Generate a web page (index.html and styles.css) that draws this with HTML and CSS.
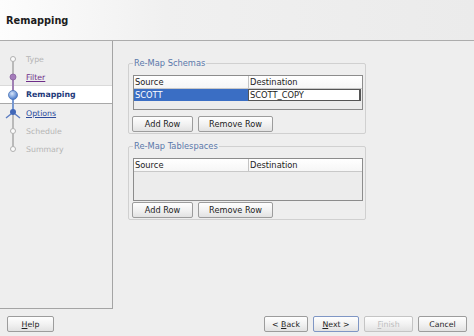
FILE: index.html
```html
<!DOCTYPE html>
<html lang="en">
<head>
    <meta charset="UTF-8">
    <meta name="viewport" content="width=device-width, initial-scale=1.0">
    <title>Remapping</title>
    <link rel="stylesheet" href="styles.css">
</head>
<body>
<div class="dialog">
    <div class="header">
        <h1>Remapping</h1>
    </div>

    <div class="main">
        <!-- wizard steps -->
        <ul class="steps">
            <li class="step off">
                <svg width="26" height="18"><line x1="13" y1="9" x2="13" y2="18" stroke="#b9b9b9" stroke-width="2"/><circle cx="13" cy="9" r="2.5" fill="#fbfbfb" stroke="#b0b0b0"/></svg>
                <span>Type</span>
            </li>
            <li class="step visited">
                <svg width="26" height="18"><line x1="13" y1="0" x2="13" y2="9" stroke="#b9b9b9" stroke-width="2"/><line x1="13" y1="9" x2="13" y2="18" stroke="#a080b4" stroke-width="2"/><circle cx="13" cy="9" r="3" fill="#a47cba" stroke="#8a62a0" stroke-width="0.8"/></svg>
                <a href="#">Filter</a>
            </li>
            <li class="step current">
                <svg width="26" height="18">
                    <defs><radialGradient id="cur" cx="40%" cy="35%" r="70%"><stop offset="0" stop-color="#d6e6fb"/><stop offset="1" stop-color="#3c6fc4"/></radialGradient></defs>
                    <line x1="13" y1="0" x2="13" y2="9" stroke="#a080b4" stroke-width="2"/><line x1="13" y1="9" x2="13" y2="18" stroke="#7898d0" stroke-width="2"/><circle cx="13" cy="9" r="4.5" fill="url(#cur)" stroke="#4a73b8" stroke-width="0.8"/></svg>
                <span>Remapping</span>
            </li>
            <li class="step next">
                <svg width="26" height="18"><line x1="13" y1="0" x2="13" y2="8" stroke="#7898d0" stroke-width="2"/><line x1="13" y1="8" x2="13" y2="18" stroke="#b9b9b9" stroke-width="2"/><path d="M11 10 L6 14 M15 10 L20 14" stroke="#5b7cc2" stroke-width="1.4" fill="none"/><circle cx="13" cy="8" r="3" fill="#4067b8"/></svg>
                <a href="#">Options</a>
            </li>
            <li class="step off">
                <svg width="26" height="18"><line x1="13" y1="0" x2="13" y2="18" stroke="#b9b9b9" stroke-width="2"/><circle cx="13" cy="9" r="2.5" fill="#fbfbfb" stroke="#b0b0b0"/></svg>
                <span>Schedule</span>
            </li>
            <li class="step off">
                <svg width="26" height="18"><line x1="13" y1="0" x2="13" y2="9" stroke="#b9b9b9" stroke-width="2"/><circle cx="13" cy="9" r="2.5" fill="#fbfbfb" stroke="#b0b0b0"/></svg>
                <span>Summary</span>
            </li>
        </ul>

        <div class="content">
            <fieldset class="group">
                <legend>Re-Map Schemas</legend>
                <div class="grid grid-schemas">
                    <div class="grid-head"><span>Source</span><span>Destination</span></div>
                    <div class="grid-row selected"><span>SCOTT</span><span class="editing">SCOTT_COPY</span></div>
                </div>
                <div class="row-buttons">
                    <button class="btn btn-add">Add Row</button>
                    <button class="btn btn-remove">Remove Row</button>
                </div>
            </fieldset>

            <fieldset class="group">
                <legend>Re-Map Tablespaces</legend>
                <div class="grid grid-spaces">
                    <div class="grid-head"><span>Source</span><span>Destination</span></div>
                </div>
                <div class="row-buttons">
                    <button class="btn btn-add">Add Row</button>
                    <button class="btn btn-remove">Remove Row</button>
                </div>
            </fieldset>
        </div>
    </div>

    <div class="footer">
        <button class="btn btn-help"><u>H</u>elp</button>
        <div class="nav-buttons">
            <button class="btn btn-back">&lt; <u>B</u>ack</button>
            <button class="btn btn-next"><u>N</u>ext &gt;</button>
            <button class="btn btn-finish" disabled><u>F</u>inish</button>
            <button class="btn btn-cancel">Cancel</button>
        </div>
    </div>
</div>
</body>
</html>
```

FILE: styles.css
```css
/* dialog frame */
body {
    margin: 0;
    background: #eeeeee;
    font-family: "DejaVu Sans", Verdana, sans-serif;
    font-size: 8px;
    color: #222;
}

.dialog {
    width: 474px;
    height: 336px;
    overflow: hidden;
}

.header {
    height: 40px;
    border-bottom: 1px solid #acacac;
    background: linear-gradient(to right, #fdfdfd 0%, #f0f0f0 35%, #ebebeb 100%);
    display: flex;
    align-items: center;
    padding-left: 6px;
}

.header h1 {
    margin: 0;
    font-size: 9.8px;
    font-weight: bold;
    color: #1c1c1c;
}

.main {
    display: flex;
    height: 268px;
}

/* wizard steps on the left */
.steps {
    list-style: none;
    margin: 0;
    padding: 9px 0 0 0;
    width: 112px;
    border-right: 1px solid #a4a4a4;
    border-bottom: 1px solid #a4a4a4;
    box-sizing: content-box;
    height: 258px;
}

.step {
    display: flex;
    align-items: center;
    height: 18px;
    font-size: 7.8px;
}

.step svg {
    flex: none;
}

.step.off span {
    color: #b5b5b5;
}

.step.visited a {
    color: #6d2d88;
}

.step.next a {
    color: #2c4a9c;
}

.step.current {
    background: #ffffff;
    border-top: 1px solid #dadada;
    border-bottom: 1px solid #a8a8a8;
    height: 17px;
    margin-top: -1px;
}

.step.current span {
    font-weight: bold;
    color: #1e3a7a;
}

/* right hand content */
.content {
    flex: 1;
    padding: 16px 0 0 15px;
}

.group {
    width: 238px;
    box-sizing: border-box;
    margin: 0 0 6px 0;
    padding: 6px 2px 1px 4px;
    border: 1px solid #d0d0d0;
    border-radius: 2px;
    font-size: 8.3px;
}

.group legend {
    padding: 0 1px;
    line-height: 12px;
    color: #5a78aa;
}

.grid {
    border: 1px solid #8c8c8c;
    background: #ececec;
}

.grid-schemas {
    height: 33px;
    margin-bottom: 6px;
}

.grid-spaces {
    height: 41px;
    margin-bottom: 1px;
}

.grid-head,
.grid-row {
    display: grid;
    grid-template-columns: 114px 1fr;
}

.grid-head {
    height: 12px;
    background: linear-gradient(#ffffff, #f6f6f6);
    border-bottom: 1px solid #c8c8c8;
}

.grid-head span,
.grid-row span {
    line-height: 12px;
    padding-left: 1px;
}

.grid-head span + span {
    border-left: 1px solid #c4c4c4;
}

.grid-row {
    height: 12px;
}

.grid-row.selected span:first-child {
    background: #3a6ec4;
    color: #ffffff;
}

.grid-row .editing {
    background: #ffffff;
    border: 1px solid #555;
    border-right-width: 2px;
    margin-right: 1px;
    line-height: 10px;
}

.row-buttons {
    display: flex;
    gap: 5px;
}

/* buttons */
.btn {
    height: 16px;
    padding: 0;
    font-family: "DejaVu Sans", Verdana, sans-serif;
    font-size: 8.2px;
    color: #222;
    border: 1px solid #9c9c9c;
    border-radius: 2px;
    background: linear-gradient(#fefefe, #f2f2f2 50%, #e2e2e2);
}

.btn-add {
    width: 61px;
    margin-left: -1px;
}

.btn-remove {
    width: 75px;
}

.footer {
    display: flex;
    justify-content: space-between;
    padding: 7px 7px 0 7px;
}

.footer .btn {
    font-size: 7.8px;
}

.nav-buttons {
    display: flex;
    gap: 5px;
}

.btn-help {
    width: 47px;
}

.btn-back {
    width: 44px;
}

.btn-next {
    width: 46px;
    border-color: #7f96c4;
}

.btn-finish {
    width: 49px;
    color: #bdbdbd;
    border-color: #c4c4c4;
}

.btn-cancel {
    width: 49px;
}
```
